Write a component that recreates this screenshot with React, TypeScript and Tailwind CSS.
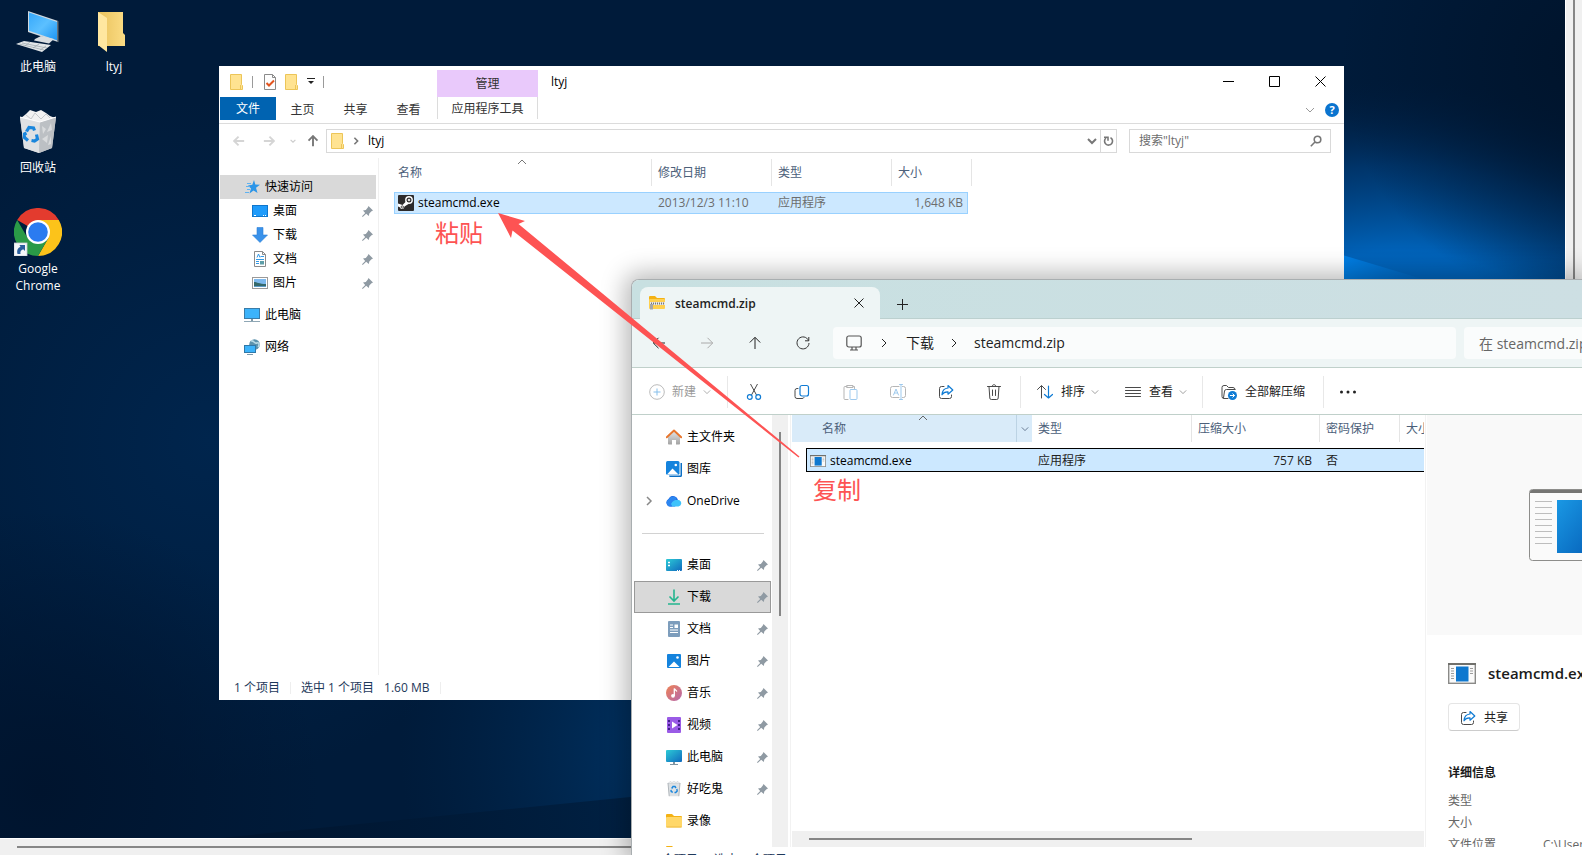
import type { ReactNode } from "react";

interface IconProps {
  className?: string;
}

const DESKTOP_ICONS = [
  [
    { label: "此电脑", icon: <PcLarge /> },
    { label: "回收站", icon: <RecycleBin /> },
    { label: "Google Chrome", icon: <ChromeIcon /> },
  ],
  [{ label: "ltyj", icon: <FolderLarge /> }],
];

const QUICK_ACCESS = [
  { label: "桌面", icon: <DesktopSmall /> },
  { label: "下载", icon: <DownloadBlue /> },
  { label: "文档", icon: <DocSmall /> },
  { label: "图片", icon: <PictureSmall /> },
];

const SIDEBAR_TOP = [
  { label: "主文件夹", icon: <HomeIcon />, expandable: false },
  { label: "图库", icon: <GalleryIcon />, expandable: false },
  { label: "OneDrive", icon: <CloudIcon />, expandable: true },
];

const SIDEBAR_PINNED = [
  { label: "桌面", icon: <DesktopTeal />, pinned: true },
  { label: "下载", icon: <DownloadGreen />, pinned: true, active: true },
  { label: "文档", icon: <DocBlue />, pinned: true },
  { label: "图片", icon: <PictureBlue />, pinned: true },
  { label: "音乐", icon: <MusicIcon />, pinned: true },
  { label: "视频", icon: <VideoIcon />, pinned: true },
  { label: "此电脑", icon: <PcTeal />, pinned: true },
  { label: "好吃鬼", icon: <BinSmall />, pinned: true },
  { label: "录像", icon: <FolderYellow />, pinned: false },
  { label: "", icon: <FolderYellow />, pinned: false },
];

/* ---------- Icons ---------- */

function PcLarge() {
  return (
    <svg width="48" height="48" viewBox="10 -1 48 48">
      <defs>
        <linearGradient id="pcl" x1="0" y1="0" x2="1" y2="1">
          <stop offset="0" stopColor="#35a8fb" />
          <stop offset="0.5" stopColor="#5cc0ff" />
          <stop offset="1" stopColor="#1c94f2" />
        </linearGradient>
      </defs>
      <path d="M24 4 54 14v21L24 25z" fill="#cfd8de" />
      <path d="M25 5.500 53 15v18.300L25 23.800z" fill="url(#pcl)" />
      <path d="M53 13.700 54.500 14.200v21l-1.500-.5z" fill="#66727a" />
      <path d="M31 32l6-3 13 3-5 4.500-15-3z" fill="#d8dde0" />
      <path d="M12 37l8-3 27 4-9 7z" fill="#e3e7e9" />
      <path d="M15 37l25 6M18 36l25 5M21 39l5-4M29 41l6-4M36 43l6-4" stroke="#9aa5ab" strokeWidth="0.700" />
    </svg>
  );
}

function FolderLarge() {
  return (
    <svg width="48" height="48" viewBox="0 0 48 48">
      <defs>
        <linearGradient id="fl" x1="0" y1="0" x2="1" y2="0">
          <stop offset="0" stopColor="#e9c25c" />
          <stop offset="1" stopColor="#fbdc84" />
        </linearGradient>
      </defs>
      <path d="M8 6h25v21l2 2v11H8z" fill="url(#fl)" />
      <path d="M8 6l9 6v34l-9-7z" fill="#ffe7a0" />
    </svg>
  );
}

function RecycleBin() {
  return (
    <svg className="h-11 w-10" viewBox="0 0 40 44">
      <path d="M2 8 22 13 38 8 34 39 21 44 6 39z" fill="#d3d6d9" />
      <path d="M3 9l5-4 4-4 6 2 5-2 5 3 4 3 5 2-15 4.500z" fill="#f2f2f2" />
      <path d="M8 6l5 4 4-6 6 6 5-5 4 4" fill="none" stroke="#c6c9cc" strokeWidth="1" />
      <path d="M2 8l20 5-1 31L6 39z" fill="#dfe1e3" />
      <path d="M22 13l16-5-4 31-13 5z" fill="#bcc0c4" />
      <path d="M24 17l4 3-3 5zM33 14l-4 9 5-2zM24 30l6-4-1 8zM33 27l-3 9 3-1z" fill="#d9dbdd" />
      <path d="M2 8l20 5 16-5" fill="none" stroke="#fff" strokeWidth="1" />
      <path d="M8.500 22.500 11 18.500l4.500.5 1 2.500M18.500 25.500 19.500 30 16.500 32l-3-.5M10 31.500l-3.500-3V25l2-1" fill="none" stroke="#1a86dc" strokeWidth="3.200" />
    </svg>
  );
}

function BinSmall() {
  return (
    <svg width="16" height="16" viewBox="0 0 16 16">
      <path d="M2 2h12l-1.200 13.200H3.200z" fill="#dde1e4" />
      <path d="M2 2.500l2-2 2 1 2-1 2 1 2-1 2 2z" fill="#f1f3f4" stroke="#c3c8cc" strokeWidth=".6" />
      <path d="M2 2l1.200 13.200M14 2l-1.200 13.200" stroke="#b0b6bb" />
      <path d="M5.700 7.500 7 5.500h2l1 1.500M10.800 8l.4 2-1.500 1.500H8.500M6.800 11.300 5.200 10.500 5 8.800" fill="none" stroke="#1a86dc" strokeWidth="1.400" />
    </svg>
  );
}

function ChromeIcon() {
  return (
    <svg width="48" height="48" viewBox="0 0 48 48">
      <path d="M24 24 3.200 12A24 24 0 0 1 44.800 12z" fill="#e33b2e" />
      <path d="M24 12h20.800A24 24 0 0 1 24 48l10.400-18z" fill="#fcc31a" />
      <path d="M13.600 30 3.200 12A24 24 0 0 0 24 48l10.400-18z" fill="#2a9a47" />
      <circle cx="24" cy="24" r="12" fill="#fff" />
      <circle cx="24" cy="24" r="9.800" fill="#2b7bf0" />
      <rect x="0" y="35" width="13" height="13" fill="#f5f7f9" stroke="#c8ced4" strokeWidth="0.800" />
      <path d="M3.500 46c-1-4 .5-6.500 3-7L5.500 37H11v6l-1.800-1.800C7 42 6 43.500 6.500 46z" fill="#2a5f9e" />
    </svg>
  );
}

function FolderIcon() {
  return (
    <svg width="13" height="16" viewBox="0 0 13 16">
      <path d="M.5.500h11v10l1 1v4H.5z" fill="#ffe391" stroke="#ecc558" />
      <path d="M10.500 11v4.500" stroke="#ecc558" />
    </svg>
  );
}

function CheckDoc() {
  return (
    <svg width="12" height="16" viewBox="0 0 12 16">
      <path d="M.5.500h8l3 3v12H.5z" fill="#fdfdfd" stroke="#8a8a8a" />
      <path d="M8.500.500v3h3" fill="none" stroke="#8a8a8a" />
      <path d="M2.500 9l2.500 2.500 5-5" fill="none" stroke="#e2541f" strokeWidth="2" />
    </svg>
  );
}

function Chevron({ className, dir = "down" }: IconProps & { dir?: "down" | "right" | "up" }) {
  const d = dir === "down" ? "M1 3l4 4 4-4" : dir === "up" ? "M1 7l4-4 4 4" : "M3 1l4 4-4 4";
  return (
    <svg className={className} viewBox="0 0 10 10" fill="none" stroke="currentColor">
      <path d={d} />
    </svg>
  );
}

function Arrow({ className, dir, bold }: IconProps & { dir: "left" | "right" | "up"; bold?: boolean }) {
  const d =
    dir === "left"
      ? "M13 7H1.500M6.500 1.800 1.300 7l5.200 5.200"
      : dir === "right"
        ? "M1 7h11.500M7.500 1.800 12.700 7l-5.200 5.200"
        : "M7 13V1.500M1.800 6.500 7 1.300l5.200 5.200";
  return (
    <svg className={className} width="14" height="14" viewBox="0 0 14 14" fill="none" stroke="currentColor" strokeWidth={bold ? 2.200 : 1}>
      <path d={d} />
    </svg>
  );
}

function PinIcon() {
  return (
    <svg width="11" height="11" viewBox="0 0 11 11">
      <path d="M6.500 0 11 4.500 9.500 5.200 7.300 7.500 6.800 10 4.200 7.800.7 11 0 10.300 3.200 7 1 4.500 3.800 4 5.800 1.500z" fill="#8f9aa3" />
    </svg>
  );
}

function StarIcon() {
  return (
    <svg width="15" height="14" viewBox="0 0 15 14">
      <path d="M9 0l1.300 4.500L15 4.800l-4 3L12.500 13 8.500 10.500 4.500 13.500 6 8.500 3 5.500l4.300-.8z" fill="#2b95e8" />
      <path d="M2 3.500h4M1 6.500h4M2 9.500h3M0 12.500h4" stroke="#5fb2f0" />
    </svg>
  );
}

function DesktopSmall() {
  return (
    <svg width="16" height="12" viewBox="0 0 16 12">
      <rect x=".5" y=".5" width="15" height="11" fill="#1e9bfb" stroke="#0f76cc" />
      <path d="M2 10.500h2M11 10.500h1M13 10.500h1" stroke="#fff" />
    </svg>
  );
}

function DownloadBlue() {
  return (
    <svg width="16" height="16" viewBox="0 0 16 16">
      <path d="M5 .5h6V8h4.500L8 15.500.5 8H5z" fill="#3a92ea" stroke="#2c7fd6" strokeWidth=".6" />
    </svg>
  );
}

function DocSmall() {
  return (
    <svg width="16" height="16" viewBox="0 0 16 16">
      <path d="M2.500.500h8l3 3v12h-11z" fill="#fff" stroke="#8b8b8b" />
      <path d="M10.500.500v3h3" fill="none" stroke="#8b8b8b" />
      <path d="M5 6.500 6.500 3 8 6.500M8.500 5.500H12M4 8.500h8M4 10.500h3M4 12.500h3" fill="none" stroke="#3399e6" />
      <path d="M8 10h4v3.500H8z" fill="#5d9ea8" />
    </svg>
  );
}

function PictureSmall() {
  return (
    <svg width="16" height="12" viewBox="0 0 16 12">
      <rect x=".5" y=".5" width="15" height="11" fill="#fff" stroke="#9a9a9a" />
      <path d="M2 2h12v5H2z" fill="#7db9ee" />
      <path d="M2 5c3 0 5 2 12 2v3H2z" fill="#35696b" />
      <path d="M2 9h12v1H2z" fill="#5c9bc8" />
    </svg>
  );
}

function PcSmall() {
  return (
    <svg width="16" height="15" viewBox="0 0 16 15">
      <rect x=".5" y=".5" width="15" height="10" fill="#3cb3fa" stroke="#3a7ca8" />
      <path d="M7 11h2v2H7z" fill="#7f99a8" />
      <path d="M0 13.500h16" stroke="#8fa7b5" />
    </svg>
  );
}

function NetworkSmall() {
  return (
    <svg width="16" height="16" viewBox="0 0 16 16">
      <circle cx="10.500" cy="5.500" r="5.300" fill="#5d93ad" />
      <path d="M7 2c3-1 3 3 6 2s2 3 1 4" fill="none" stroke="#b9dbe6" strokeWidth="1.500" />
      <rect x=".5" y="6.500" width="11" height="7" fill="#3cb3fa" stroke="#2f78a8" />
      <path d="M3 15.500h6" stroke="#7d9aab" />
    </svg>
  );
}

function SteamIcon() {
  return (
    <svg className="shrink-0" width="16" height="16" viewBox="0 0 16 16">
      <rect width="16" height="16" rx="1" fill="#2c2a2b" />
      <circle cx="11" cy="5" r="3.200" fill="none" stroke="#fff" strokeWidth="1.400" />
      <circle cx="11" cy="5" r="1.300" fill="#ddd" />
      <path d="M0 8.500 4.500 10 8.500 6l2 3-4 2.500C6 14.500 3 15 1.800 12.200L0 11.500z" fill="#fff" />
      <circle cx="4.300" cy="12" r="1.200" fill="none" stroke="#2c2a2b" strokeWidth=".8" />
    </svg>
  );
}

function HomeIcon() {
  return (
    <svg width="16" height="16" viewBox="0 0 16 16">
      <defs>
        <linearGradient id="hm" x1="0" y1="0" x2="0" y2="1">
          <stop offset="0" stopColor="#e4e4e4" />
          <stop offset="1" stopColor="#a3a3a3" />
        </linearGradient>
      </defs>
      <path d="M2 7.500 8 2l6 5.500v7.200a.8.8 0 0 1-.8.800H10V11H6v4.500H2.800a.8.800 0 0 1-.8-.8z" fill="url(#hm)" />
      <path d="M.8 8.300 8 1.500l7.200 6.800" fill="none" stroke="#e8762d" strokeWidth="1.900" strokeLinecap="round" strokeLinejoin="round" />
    </svg>
  );
}

function GalleryIcon() {
  return (
    <svg width="16" height="16" viewBox="0 0 16 16">
      <path d="M3 14.500h11.500V2H16v12.500a1.500 1.500 0 0 1-1.500 1.500h-10A1.500 1.500 0 0 1 3 14.500z" fill="#0b6fc4" />
      <rect width="13.500" height="13.800" rx="1.500" fill="#1483dd" />
      <path d="M1 13.500 6.500 7.500l6 6z" fill="#fff" />
      <circle cx="9.800" cy="4" r="1.300" fill="#fff" />
    </svg>
  );
}

function CloudIcon() {
  return (
    <svg width="16" height="12" viewBox="0 0 16 12">
      <path d="M4 11.500A4 4 0 0 1 2.500 4 5 5 0 0 1 11 3l2 4-4 4.500z" fill="#1b63e0" />
      <path d="M2.800 4a5 5 0 0 1 8-1L6 11.500H4A4 4 0 0 1 2.800 4z" fill="#2b86f0" />
      <path d="M6.500 11.500 5 9c2-4 6-5 8.500-3.700A3.300 3.300 0 0 1 12.500 11.500z" fill="#3fc3fb" />
    </svg>
  );
}

function DesktopTeal() {
  return (
    <svg width="16" height="12" viewBox="0 0 16 12">
      <defs>
        <linearGradient id="dt" x1="0" y1="0" x2="1" y2="1">
          <stop offset="0" stopColor="#2ccbd6" />
          <stop offset="1" stopColor="#1069be" />
        </linearGradient>
      </defs>
      <rect width="16" height="12" rx="1" fill="url(#dt)" />
      <path d="M2 3.500h2M2 6.500h2" stroke="#fff" strokeWidth="1.500" />
      <path d="M11 11.500h1M13 11.500h1" stroke="#fff" />
    </svg>
  );
}

function DownloadGreen() {
  return (
    <svg width="16" height="16" viewBox="0 0 16 16" fill="none" stroke="#23b58e" strokeWidth="1.600">
      <path d="M8 .5v11M3.500 7.500 8 12l4.500-4.500M2 15h12" />
    </svg>
  );
}

function DocBlue() {
  return (
    <svg width="16" height="16" viewBox="0 0 16 16">
      <rect x="2" width="12" height="16" rx="1" fill="#7d9dbc" />
      <path d="M4 4h3M4 6.500h3M4 9h8M4 11.500h8" stroke="#fff" />
      <path d="M8.500 3.500h3.500V7H8.500z" fill="#fff" />
    </svg>
  );
}

function PictureBlue() {
  return (
    <svg width="16" height="14" viewBox="0 0 16 14">
      <rect x="1" width="14" height="14" rx="1" fill="#1483dd" />
      <path d="M2.500 13 8 7.500l5.500 5.500z" fill="#fff" />
      <circle cx="11.500" cy="3.500" r="1.300" fill="#fff" />
    </svg>
  );
}

function MusicIcon() {
  return (
    <svg width="16" height="16" viewBox="0 0 16 16">
      <defs>
        <linearGradient id="mu" x1="0" y1="0" x2="1" y2="1">
          <stop offset="0" stopColor="#ef8354" />
          <stop offset="1" stopColor="#b467ae" />
        </linearGradient>
      </defs>
      <circle cx="8" cy="8" r="8" fill="url(#mu)" />
      <circle cx="7" cy="10.800" r="1.900" fill="#fff" />
      <path d="M8.300 11V3.500c.5 1.500 2 1.500 2.500 3" fill="none" stroke="#fff" strokeWidth="1.300" />
    </svg>
  );
}

function VideoIcon() {
  return (
    <svg width="16" height="16" viewBox="0 0 16 16">
      <rect x="1" width="14" height="16" rx="1" fill="#9a5be6" />
      <path d="M2 3h2v2H2zM2 7h2v2H2zM2 11h2v2H2zM12 3h2v2h-2zM12 7h2v2h-2zM12 11h2v2h-2z" fill="#42208a" />
      <path d="M6 4.500 11.500 8 6 11.500z" fill="#fff" />
    </svg>
  );
}

function PcTeal() {
  return (
    <svg width="16" height="15" viewBox="0 0 16 15">
      <rect width="16" height="12" rx="1" fill="url(#dt)" />
      <path d="M7 12h2v2H7z" fill="#8095a2" />
      <path d="M4 14.500h8" stroke="#8095a2" />
    </svg>
  );
}

function FolderYellow() {
  return (
    <svg width="16" height="14" viewBox="0 0 16 14">
      <path d="M0 1a1 1 0 0 1 1-1h5l2 2h7a1 1 0 0 1 1 1v4H0z" fill="#f4b214" />
      <rect y="3" width="16" height="10.500" rx="1" fill="#ffd768" />
      <path d="M.5 13h15" stroke="#eebb42" />
    </svg>
  );
}

function ZipIcon() {
  return (
    <svg width="16" height="14" viewBox="0 0 16 14">
      <path d="M0 1a1 1 0 0 1 1-1h5l2 2h7a1 1 0 0 1 1 1v4H0z" fill="#f4b214" />
      <rect y="3" width="16" height="10" rx="1" fill="#ffd04f" />
      <path d="M1 7.500h15" stroke="#e8e8e8" strokeWidth="3" />
      <path d="M2 7.500h14" stroke="#777" strokeWidth="2" strokeDasharray="1 1" />
      <path d="M1 8h3v5.500H1z" fill="#a7a7a7" />
    </svg>
  );
}

function ExeIcon({ className }: IconProps) {
  return (
    <svg className={className} viewBox="0 0 28 21">
      <rect x=".7" y=".7" width="26.600" height="19.600" fill="#fafafa" stroke="#8a8a88" strokeWidth="1.400" />
      <path d="M0 1h28" stroke="#70706c" strokeWidth="2" />
      <path d="M3 5.500h3M3 8h3M3 10.500h3M3 13h3M3 15.500h3M22 5.500h3M22 8h3M22 10.500h3" stroke="#9b9b9b" />
      <rect x="8" y="3.500" width="12.500" height="15" fill="#0f78cf" />
    </svg>
  );
}

function ExePreview() {
  return (
    <svg className="shrink-0" width="96" height="73" viewBox="0 0 96 73">
      <defs>
        <linearGradient id="exe" x1="0" y1="0" x2="1" y2="1">
          <stop offset="0" stopColor="#1a98e4" />
          <stop offset="1" stopColor="#0560b8" />
        </linearGradient>
      </defs>
      <rect x=".5" y=".5" width="95" height="71" rx="3" fill="#fafafa" stroke="#8d8d8b" />
      <path d="M1 4V3a2 2 0 0 1 2-2h90a2 2 0 0 1 2 2v1z" fill="#757573" />
      <path d="M6 12.500h17M6 18.500h17M6 24.500h17M6 30.500h17M6 36.500h17M6 42.500h17M6 48.500h17M6 54.500h17" stroke="#bdbdbd" />
      <rect x="28" y="11" width="40" height="53" fill="url(#exe)" />
    </svg>
  );
}

function Line({ children, className }: { children: ReactNode; className?: string }) {
  return (
    <svg className={className ?? "shrink-0"} width="16" height="16" viewBox="0 0 16 16" fill="none" stroke="#4a4a4a" strokeLinecap="round" strokeLinejoin="round">
      {children}
    </svg>
  );
}

function ShareIcon() {
  return (
    <Line>
      <path d="M6 2.500H3.500a2 2 0 0 0-2 2v8a2 2 0 0 0 2 2h8a2 2 0 0 0 2-2V11" />
      <path d="M10 1.500 14.800 6 10 10.200V7.800C7 7.600 5.300 8.600 4 10.800 4.200 7 6.300 4.300 10 4z" stroke="#0f7bd4" strokeWidth="1.200" />
    </Line>
  );
}

const TOOLS = [
  {
    label: "剪切",
    icon: (
      <Line>
        <path d="M4.500 0l6 11M11.500 0l-6 11" />
        <circle cx="3.800" cy="13" r="2.400" stroke="#0f7bd4" strokeWidth="1.200" />
        <circle cx="12.200" cy="13" r="2.400" stroke="#0f7bd4" strokeWidth="1.200" />
      </Line>
    ),
  },
  {
    label: "复制",
    icon: (
      <Line>
        <path d="M4 4.500H3a2 2 0 0 0-2 2v6a2 2 0 0 0 2 2h5a2 2 0 0 0 2-1" />
        <rect x="6" y="1.500" width="8.500" height="10.500" rx="2" stroke="#0f7bd4" strokeWidth="1.200" />
      </Line>
    ),
  },
  {
    label: "粘贴",
    icon: (
      <Line className="opacity-40">
        <path d="M5 2.500H3a1 1 0 0 0-1 1v11a1 1 0 0 0 1 1h3M11 2.500h1.500v2M5 1.500h6v2H5z" />
        <rect x="8" y="5.500" width="7" height="10" rx="1" stroke="#0f7bd4" />
      </Line>
    ),
  },
  {
    label: "重命名",
    icon: (
      <Line className="opacity-40">
        <path d="M9 2.500H2.500a2 2 0 0 0-2 2v7a2 2 0 0 0 2 2H9M12.500 2.500h1a2 2 0 0 1 2 2v7a2 2 0 0 1-2 2h-1" />
        <path d="M3.500 11 6 5l2.500 6M4.500 9h3M11 .5v15M9.500.500h3M9.500 15.500h3" stroke="#0f7bd4" />
      </Line>
    ),
  },
  { label: "共享", icon: <ShareIcon /> },
  {
    label: "删除",
    icon: (
      <Line>
        <path d="M1.500 2.500h13M6 2.500c0-2.500 4-2.500 4 0M3 2.500l.8 11.500a1.500 1.500 0 0 0 1.500 1.500h5.400a1.500 1.500 0 0 0 1.500-1.500L13 2.500M6.500 6v5.500M9.500 6v5.500" />
      </Line>
    ),
  },
];

/* ---------- Desktop ---------- */

function Wallpaper() {
  return (
    <svg className="absolute inset-0 h-full w-full" viewBox="0 0 1565 837" preserveAspectRatio="none">
      <defs>
        <radialGradient id="glow" gradientUnits="userSpaceOnUse" cx="1400" cy="420" r="400" gradientTransform="translate(1400 420) scale(1 .85) translate(-1400 -420)">
          <stop offset="0" stopColor="#0078dc" />
          <stop offset=".5" stopColor="#0062b8" />
          <stop offset=".75" stopColor="#003b76" stopOpacity=".8" />
          <stop offset="1" stopColor="#001e42" stopOpacity="0" />
        </radialGradient>
        <radialGradient id="left" gradientUnits="userSpaceOnUse" cx="210" cy="440" r="340">
          <stop offset="0" stopColor="#00254d" />
          <stop offset="1" stopColor="#00254d" stopOpacity="0" />
        </radialGradient>
        <radialGradient id="low" gradientUnits="userSpaceOnUse" cx="740" cy="750" r="340">
          <stop offset="0" stopColor="#003f7a" />
          <stop offset="1" stopColor="#002b55" stopOpacity="0" />
        </radialGradient>
        <linearGradient id="dark" x1="0" y1="0" x2="1" y2="0">
          <stop offset="0" stopColor="#00142d" />
          <stop offset="1" stopColor="#001f40" />
        </linearGradient>
        <radialGradient id="corner" gradientUnits="userSpaceOnUse" cx="1580" cy="60" r="240">
          <stop offset="0" stopColor="#00142c" />
          <stop offset="1" stopColor="#00142c" stopOpacity="0" />
        </radialGradient>
        <radialGradient id="corner2" gradientUnits="userSpaceOnUse" cx="40" cy="790" r="280">
          <stop offset="0" stopColor="#00142e" />
          <stop offset="1" stopColor="#00142e" stopOpacity="0" />
        </radialGradient>
        <linearGradient id="beam" x1="0" y1="0" x2="1" y2="0">
          <stop offset="0" stopColor="#0080e6" />
          <stop offset="1" stopColor="#0078dc" stopOpacity="0" />
        </linearGradient>
      </defs>
      <rect width="1565" height="837" fill="#001b3a" />
      <rect width="1565" height="837" fill="url(#left)" />
      <rect width="1565" height="837" fill="url(#low)" />
      <rect width="1565" height="837" fill="url(#glow)" />
      <rect width="400" height="837" fill="url(#corner2)" />
      <rect x="1300" width="265" height="300" fill="url(#corner)" />
      <path d="M1340 254l90 27h-90z" fill="url(#beam)" />
      <path d="M220 837 660 793v44z" fill="url(#dark)" opacity=".85" />
    </svg>
  );
}

function DesktopIcons() {
  return (
    <div className="relative flex pt-1.5">
      {DESKTOP_ICONS.map((column, i) => (
        <div key={i} className="flex w-[76px] flex-col">
          {column.map((item) => (
            <button key={item.label} className="flex h-[101px] flex-col items-center gap-1 px-3 leading-[17px] text-white">
              <span className="flex h-12 w-12 items-center justify-center">{item.icon}</span>
              <span>{item.label}</span>
            </button>
          ))}
        </div>
      ))}
    </div>
  );
}

/* ---------- Remote explorer window (ltyj) ---------- */

function LtyjWindow() {
  return (
    <section className="absolute top-[66px] right-[221px] bottom-[138px] left-[219px] flex flex-col bg-white text-black">
      <header className="flex h-[58px] shrink-0 border-b border-[#dcdcdc]">
        <div className="flex w-[218px] flex-col">
          <div className="flex h-[31px] items-center gap-[9px] pl-[11px]">
            <FolderIcon />
            <i className="mr-0.5 h-3 w-px bg-[#9a9a9a]" />
            <CheckDoc />
            <FolderIcon />
            <svg width="8" height="7" viewBox="0 0 8 7">
              <path d="M0 .5h8" stroke="#222" />
              <path d="M1 3h6L4 6z" fill="#222" />
            </svg>
            <i className="-ml-px h-3 w-px bg-[#9a9a9a]" />
          </div>
          <div className="flex h-[23px] pl-px text-[#333]">
            <button className="w-14 bg-[#0063b1] text-white">文件</button>
            <button className="w-[53px] pt-0.5">主页</button>
            <button className="w-[53px] pt-0.5">共享</button>
            <button className="w-[53px] pt-0.5">查看</button>
          </div>
        </div>
        <div className="flex w-[101px] flex-col pt-1 text-[#333]">
          <button className="h-[27px] bg-[#e9c9fb]">管理</button>
          <button className="h-[22px] border-x border-[#dcdcdc] pt-0.5">应用程序工具</button>
        </div>
        <div className="flex flex-1 flex-col">
          <div className="flex h-[31px] items-center pl-[13px]">
            <h1 className="flex-1">ltyj</h1>
            <button aria-label="最小化" className="flex w-[45px] justify-center">
              <svg width="11" height="11" viewBox="0 0 11 11"><path d="M0 5.500h11" stroke="#000" /></svg>
            </button>
            <button aria-label="最大化" className="flex w-[46px] justify-center">
              <svg width="11" height="11" viewBox="0 0 11 11"><path d="M.5.500h10v10H.5z" fill="none" stroke="#000" /></svg>
            </button>
            <button aria-label="关闭" className="mr-px flex w-[46px] justify-center">
              <svg width="11" height="11" viewBox="0 0 11 11"><path d="M.5.500l10 10M10.500.500l-10 10" stroke="#000" /></svg>
            </button>
          </div>
          <div className="flex h-[26px] items-center justify-end gap-2.5 pr-[5px]">
            <Chevron className="h-2.5 w-2.5 text-[#999]" />
            <button aria-label="帮助" className="h-3.5 w-3.5 rounded-full bg-[#0a74cf] text-[11px] leading-[14px] font-bold text-white">
              ?
            </button>
          </div>
        </div>
      </header>

      <div className="flex h-[34px] shrink-0 items-start pt-[5px] pr-[13px] pl-[5px]">
        <div className="flex h-6 items-center text-[#777]">
          <button aria-label="后退" className="flex w-[30px] justify-center text-[#d5d5d5]"><Arrow dir="left" bold className="h-3 w-3" /></button>
          <button aria-label="前进" className="flex w-[30px] justify-center text-[#d5d5d5]"><Arrow dir="right" bold className="h-3 w-3" /></button>
          <button aria-label="最近" className="flex w-[17px] justify-center text-[#ccc]"><Chevron className="h-1.5 w-1.5 stroke-2" /></button>
          <button aria-label="上移" className="mr-px flex w-6 justify-center"><Arrow dir="up" bold className="h-3 w-3" /></button>
        </div>
        <div className="flex h-6 flex-1 items-center border border-[#d9d9d9] pl-1">
          <FolderIcon />
          <Chevron dir="right" className="mx-2 h-2 w-2 stroke-2 text-[#777]" />
          <button className="flex-1 text-left">ltyj</button>
          <Chevron className="mr-[3px] h-2.5 w-2.5 stroke-2 text-[#777]" />
          <button aria-label="刷新" className="flex h-full w-4 items-center justify-center border-l border-[#d9d9d9]">
            <svg width="11" height="12" viewBox="0 0 11 12" fill="none" stroke="#777" strokeWidth="1.600">
              <path d="M7.500 2.600A4 4 0 1 1 3 3M1 2.200h4v3.500" />
            </svg>
          </button>
        </div>
        <div className="ml-3 flex h-6 w-[202px] items-center border border-[#d9d9d9] pr-2 pl-[9px]">
          <input aria-label="搜索" placeholder={'搜索"ltyj"'} className="min-w-0 flex-1 outline-none placeholder:text-[#6d6d6d]" />
          <svg width="12" height="12" viewBox="0 0 12 12" fill="none" stroke="#777" strokeWidth="1.600">
            <circle cx="7.500" cy="4.500" r="3.300" />
            <path d="M5 7 .8 11.200" />
          </svg>
        </div>
      </div>

      <div className="flex min-h-0 flex-1">
        <nav className="flex w-40 shrink-0 flex-col border-r border-[#f0f0f0] pt-[17px] pr-0.5 pl-px">
          <button className="flex h-6 items-center gap-[5px] bg-[#d9d9d9] pl-[25px]"><StarIcon />快速访问</button>
          {QUICK_ACCESS.map((item) => (
            <button key={item.label} className="flex h-6 items-center gap-[5px] pr-[3px] pl-8">
              <span className="flex w-4 justify-center">{item.icon}</span>
              <span className="flex-1 text-left">{item.label}</span>
              <PinIcon />
            </button>
          ))}
          <button className="mt-2 flex h-6 items-center gap-[5px] pl-6"><PcSmall />此电脑</button>
          <button className="mt-2 flex h-6 items-center gap-[5px] pl-6"><NetworkSmall />网络</button>
        </nav>
        <div className="relative flex-1 pl-[15px]">
          <Chevron dir="up" className="absolute -top-px left-[138px] h-2.5 w-2.5 text-[#777]" />
          <table className="table-fixed border-separate border-spacing-0 text-left whitespace-nowrap">
            <colgroup>
              <col className="w-[258px]" />
              <col className="w-[120px]" />
              <col className="w-[120px]" />
              <col className="w-[76px]" />
              <col className="w-1" />
            </colgroup>
            <thead>
              <tr className="h-[34px] align-top text-[#4c607a]">
                <th className="p-0 font-normal"><div className="mt-px flex h-[27px] items-center border-r border-[#e5e5e5] pl-1">名称</div></th>
                <th className="p-0 font-normal"><div className="mt-px flex h-[27px] items-center border-r border-[#e5e5e5] pl-1.5">修改日期</div></th>
                <th className="p-0 font-normal"><div className="mt-px flex h-[27px] items-center border-r border-[#e5e5e5] pl-1.5">类型</div></th>
                <th className="p-0 font-normal"><div className="mt-px flex h-[27px] items-center pl-1.5">大小</div></th>
                <td className="p-0"><div className="mt-px h-[27px] border-r border-[#e5e5e5]" /></td>
              </tr>
            </thead>
            <tbody>
              <tr className="h-[22px] text-[#6d6d6d]">
                <td className="border-y border-l border-[#99d1ff] bg-[#cce8ff] p-0 pl-[3px] text-black">
                  <div className="flex h-5 items-center gap-1"><SteamIcon />steamcmd.exe</div>
                </td>
                <td className="border-y border-[#99d1ff] bg-[#cce8ff] p-0 pl-1.5">2013/12/3 11:10</td>
                <td className="border-y border-[#99d1ff] bg-[#cce8ff] p-0 pl-1.5">应用程序</td>
                <td className="border-y border-r border-[#99d1ff] bg-[#cce8ff] p-0 pr-1 text-right">1,648 KB</td>
                <td className="p-0" />
              </tr>
            </tbody>
          </table>
        </div>
      </div>

      <footer className="flex h-[25px] shrink-0 items-center pl-[15px] text-[#1e395b]">
        <span>1 个项目</span>
        <i className="mx-2.5 h-3 w-px bg-[#eee]" />
        <span>选中 1 个项目</span>
        <span className="ml-2.5">1.60 MB</span>
        <i className="mx-2.5 h-3 w-px bg-[#eee]" />
      </footer>
    </section>
  );
}

/* ---------- Local explorer window (steamcmd.zip) ---------- */

function ZipToolbar() {
  return (
    <div className="flex h-[47px] shrink-0 items-center border-b border-[#c0d0ca] bg-white pt-px pl-px">
      <button disabled className="flex items-center gap-[7px] pl-4 text-[#9a9a9a]">
        <svg width="16" height="16" viewBox="0 0 16 16" fill="none">
          <circle cx="8" cy="8" r="7.300" stroke="#bbb" />
          <path d="M8 4.500v7M4.500 8h7" stroke="#86bfeb" />
        </svg>
        新建
        <Chevron className="h-2 w-2" />
      </button>
      <i className="mr-0.5 ml-4 h-8 w-px bg-[#e8e8e8]" />
      {TOOLS.map((tool) => (
        <button key={tool.label} aria-label={tool.label} className="flex w-12 justify-center">{tool.icon}</button>
      ))}
      <i className="mr-4 ml-0.5 h-8 w-px bg-[#e8e8e8]" />
      <button className="flex items-center gap-2">
        <Line>
          <path d="M4.500 14V2M.5 5.500 4.500 1.500l4 4" />
          <path d="M11.500 2v12M7.500 10.500l4 3.500 4-3.500" stroke="#0f7bd4" strokeWidth="1.200" />
        </Line>
        排序
        <Chevron className="-ml-0.5 h-2 w-2 text-[#888]" />
      </button>
      <button className="ml-[26px] flex items-center gap-2">
        <Line><path d="M.5 3.500h15M.5 6.500h15M.5 9.500h15M.5 12.500h15" /></Line>
        查看
        <Chevron className="-ml-0.5 h-2 w-2 text-[#888]" />
      </button>
      <i className="mr-[18px] ml-[15px] h-8 w-px bg-[#e8e8e8]" />
      <button className="flex items-center gap-2">
        <Line>
          <path d="M7 14.500H3a2 2 0 0 1-2-2V3.500a2 2 0 0 1 2-2h2.500l2 2H12a2 2 0 0 1 2 2M2.500 14l1-7a2 2 0 0 1 2-1.500H14" />
          <circle cx="11.500" cy="11.500" r="4.500" fill="#0f7bd4" stroke="none" />
          <path d="M9.300 11.500h4M11.800 9.800l1.700 1.700-1.700 1.700" stroke="#fff" />
        </Line>
        全部解压缩
      </button>
      <i className="mr-4 ml-[18px] h-8 w-px bg-[#e8e8e8]" />
      <button aria-label="更多">
        <svg width="16" height="4" viewBox="0 0 16 4" fill="#222">
          <circle cx="1.500" cy="2" r="1.500" />
          <circle cx="8" cy="2" r="1.500" />
          <circle cx="14.500" cy="2" r="1.500" />
        </svg>
      </button>
    </div>
  );
}

function ZipSidebar() {
  return (
    <div className="flex w-[159px] shrink-0 border-r border-[#f2f2f2]">
      <nav className="flex min-w-0 flex-1 flex-col overflow-hidden pt-1.5 pl-0.5">
        {SIDEBAR_TOP.map((item) => (
          <button key={item.label} className="flex h-8 shrink-0 items-center pl-2.5">
            <span className="w-[22px]">{item.expandable && <Chevron dir="right" className="h-2.5 w-2.5 stroke-[1.500] text-[#888]" />}</span>
            <span className="mr-[5px] flex w-4 justify-center">{item.icon}</span>
            {item.label}
          </button>
        ))}
        <hr className="mx-2 mt-4 mb-[15px] border-[#d2d2d2]" />
        {SIDEBAR_PINNED.map((item) => (
          <button
            key={item.label}
            className={`mr-px flex h-8 shrink-0 items-center border pl-[31px] ${item.active ? "border-[#999] bg-[#d9d9d9]" : "border-transparent"}`}
          >
            <span className="mr-[5px] flex w-4 justify-center">{item.icon}</span>
            <span className="flex-1 text-left">{item.label}</span>
            <span className="pr-0.5">{item.pinned && <PinIcon />}</span>
          </button>
        ))}
      </nav>
      <div className="w-4 shrink-0 bg-[#f0f0f0] pt-[17px] pl-[7px]">
        <div className="h-[184px] w-0.5 bg-[#868686]" />
      </div>
      <i className="w-0.5" />
    </div>
  );
}

function ZipFileList() {
  return (
    <div className="flex min-w-0 flex-1 flex-col pl-px">
      <div className="relative min-h-0 flex-1 overflow-hidden">
        <Chevron dir="up" className="absolute -top-0.5 left-[126px] h-2.5 w-2.5 text-[#666]" />
        <table className="w-[740px] table-fixed border-separate border-spacing-0 text-left whitespace-nowrap">
          <colgroup>
            <col className="w-3.5" />
            <col className="w-[226px]" />
            <col className="w-40" />
            <col className="w-32" />
            <col className="w-20" />
            <col />
          </colgroup>
          <thead>
            <tr className="h-[33px] align-top text-[#4c607a]">
              <td className="p-0"><div className="h-[27px] bg-[#d9ebf9]" /></td>
              <th className="p-0 font-normal">
                <div className="flex h-[27px] items-center bg-[#d9ebf9] pl-4">
                  <span className="flex-1">名称</span>
                  <span className="flex h-full w-4 items-center justify-center border-l border-[#bcd3e4]"><Chevron className="h-2 w-2" /></span>
                </div>
              </th>
              <th className="p-0 font-normal"><div className="flex h-[27px] items-center border-r border-[#e5e5e5] pl-1.5">类型</div></th>
              <th className="p-0 font-normal"><div className="flex h-[27px] items-center border-r border-[#e5e5e5] pl-1.5">压缩大小</div></th>
              <th className="p-0 font-normal"><div className="flex h-[27px] items-center border-r border-[#e5e5e5] pl-1.5">密码保护</div></th>
              <th className="p-0 font-normal"><div className="flex h-[27px] items-center pl-1.5">大小</div></th>
            </tr>
          </thead>
          <tbody>
            <tr className="h-6 text-[#222]">
              <td className="p-0" />
              <td className="border-y border-l border-black bg-[#cce8ff] p-0 pl-[3px] text-black">
                <div className="flex h-[22px] items-center gap-1 pt-px"><ExeIcon className="h-3 w-4" />steamcmd.exe</div>
              </td>
              <td className="border-y border-black bg-[#cce8ff] p-0 pt-0.5 pl-1.5">应用程序</td>
              <td className="border-y border-black bg-[#cce8ff] p-0 pt-0.5 pr-2 text-right">757 KB</td>
              <td className="border-y border-black bg-[#cce8ff] p-0 pt-0.5 pl-1.5">否</td>
              <td className="border-y border-black bg-[#cce8ff] p-0" />
            </tr>
          </tbody>
        </table>
      </div>
      <div className="h-4 shrink-0 bg-[#f0f0f0] pt-[7px] pl-[17px]">
        <div className="h-0.5 w-[383px] bg-[#868686]" />
      </div>
    </div>
  );
}

function ZipPreview() {
  return (
    <aside className="ml-px flex w-[157px] shrink-0 flex-col overflow-hidden border-l border-[#f2f2f2] pl-px whitespace-nowrap text-[#666]">
      <div className="flex h-[220px] shrink-0 bg-[#f9f9f9] pt-[74px] pl-[102px]">
        <ExePreview />
      </div>
      <div className="flex flex-col items-start pl-[21px]">
        <h2 className="mt-[27px] flex h-[22px] items-center gap-3 text-[15px] font-semibold text-[#1b1b1b]">
          <ExeIcon className="h-[21px] w-7 shrink-0" />
          steamcmd.exe
        </h2>
        <button className="mt-[19px] flex h-7 w-[72px] items-center gap-2 rounded border border-[#e5e5e5] border-b-[#ccc] pt-px pl-[11px] text-[#222]">
          <ShareIcon />
          共享
        </button>
        <h3 className="mt-[31px] leading-[22px] font-bold text-[#1b1b1b]">详细信息</h3>
        <dl className="mt-1.5 grid grid-cols-[95px_1fr] leading-[22px]">
          <dt>类型</dt>
          <dd />
          <dt>大小</dt>
          <dd />
          <dt>文件位置</dt>
          <dd>C:\Users</dd>
        </dl>
      </div>
    </aside>
  );
}

function ZipWindow() {
  return (
    <section className="absolute top-[279px] right-0 bottom-0 left-[631px] flex flex-col overflow-hidden rounded-tl-lg border-t border-l border-[#a9aeb0] bg-white text-[#222] shadow-[0_0_24px_6px_rgba(0,0,0,0.28)]">
      <div className="flex h-[39px] shrink-0 items-end border-b border-[#bcd0cf] bg-linear-to-r from-[#c8e0e1] to-[#cddfe3] pl-2">
        <div className="-mb-px flex h-8 w-60 items-center rounded-t-lg bg-[#eef5f5] pr-4 pl-[9px]">
          <ZipIcon />
          <span className="flex-1 pt-px pl-2.5 font-semibold">steamcmd.zip</span>
          <button aria-label="关闭标签页">
            <svg width="10" height="10" viewBox="0 0 10 10"><path d="M.5.500l9 9M9.500.500l-9 9" stroke="#222" /></svg>
          </button>
        </div>
        <button aria-label="新标签页" className="mb-2 ml-[17px]">
          <svg width="11" height="11" viewBox="0 0 11 11"><path d="M5.500 0v11M0 5.500h11" stroke="#222" /></svg>
        </button>
      </div>

      <div className="flex h-[49px] shrink-0 items-center border-b border-[#c0d0ca] bg-[#eef5f5] pl-[3px]">
        <button aria-label="后退" className="flex w-12 justify-center"><Arrow dir="left" /></button>
        <button aria-label="前进" className="flex w-12 justify-center text-[#aaa]"><Arrow dir="right" /></button>
        <button aria-label="上移" className="flex w-12 justify-center"><Arrow dir="up" /></button>
        <button aria-label="刷新" className="flex w-12 justify-center">
          <svg width="14" height="14" viewBox="0 0 14 14" fill="none" stroke="#333">
            <path d="M12.500 4.500A6 6 0 1 0 13 7M12.800 1v3.800H9" />
          </svg>
        </button>
        <div className="mr-2 ml-1.5 flex h-8 flex-1 items-center rounded bg-[#fafcfc] pl-[13px] text-[14px]">
          <svg width="16" height="16" viewBox="0 0 16 16" fill="none" stroke="#555" strokeWidth="1.200">
            <rect x=".8" y="1" width="14.400" height="11" rx="2" />
            <path d="M6 12v2.500M10 12v2.500M4 15h8" />
          </svg>
          <Chevron dir="right" className="mx-[17px] h-2.5 w-2.5" />
          <button>下载</button>
          <Chevron dir="right" className="mx-[15px] h-2.5 w-2.5" />
          <button>steamcmd.zip</button>
        </div>
        <div className="w-[118px] shrink-0 overflow-hidden rounded-l bg-[#fafcfc]">
          <input aria-label="搜索" placeholder="在 steamcmd.zip 中搜索" className="h-8 w-60 px-[15px] text-[14px] outline-none placeholder:text-[#666]" />
        </div>
      </div>

      <ZipToolbar />

      <div className="flex min-h-0 flex-1 text-black">
        <ZipSidebar />
        <ZipFileList />
        <ZipPreview />
      </div>
      <footer className="flex h-2 shrink-0 gap-4 overflow-hidden pt-[5px] pl-5 leading-4 text-[#1e395b]">
        <span>1 个项目</span>
        <span>选中 1 个项目</span>
      </footer>
    </section>
  );
}

function PasteArrow() {
  return (
    <svg className="pointer-events-none absolute top-0 left-0" width="900" height="500" viewBox="0 0 900 500">
      <path d="M498 213 525 221 518.500 224 799.500 456.500 798.500 457.500 512.500 230.500 511 238z" fill="#fd5353" />
    </svg>
  );
}

export default function App() {
  return (
    <div className="relative flex h-screen w-full flex-col overflow-hidden bg-[#f0f0f0] font-[family-name:'Open_Sans','Noto_Sans_CJK_SC',sans-serif] text-[12px] leading-4">
      <div className="flex min-h-0 flex-1">
        <main className="relative flex-1 overflow-hidden">
          <Wallpaper />
          <DesktopIcons />
          <LtyjWindow />
        </main>
        <div className="flex w-[17px] shrink-0 justify-center border-l border-white">
          <div className="w-0.5 bg-[#868686]" />
        </div>
      </div>
      <div className="h-[17px] shrink-0 border-t border-white pt-[7px] pl-[17px]">
        <div className="h-0.5 bg-[#868686]" />
      </div>

      <ZipWindow />
      <PasteArrow />
      <p className="absolute top-[217px] left-[435px] text-[24px] leading-8 text-[#fd5353]">粘贴</p>
      <p className="absolute top-[474px] left-[813px] text-[24px] leading-8 text-[#fd5353]">复制</p>
    </div>
  );
}
